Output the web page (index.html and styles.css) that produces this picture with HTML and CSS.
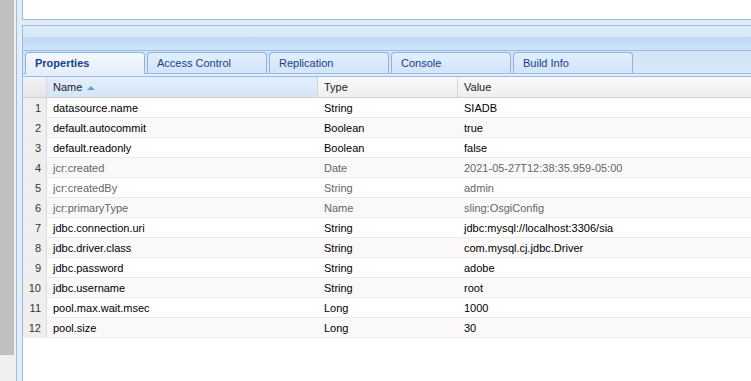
FILE: index.html
```html
<!DOCTYPE html>
<html>
<head>
  <meta charset="utf-8">
  <title>Properties</title>
  <link rel="stylesheet" href="styles.css">
</head>
<body>
  <div class="page">
    <div class="sidebar"><div class="sidebar-bar"></div></div>
    <div class="gutter"></div>
    <div class="split"></div>
    <div class="content">
      <div class="top-panel"></div>
      <div class="props-panel">
        <div class="panel-header"></div>
        <div class="tab-strip">
          <div class="tab active">Properties</div>
          <div class="tab">Access Control</div>
          <div class="tab">Replication</div>
          <div class="tab">Console</div>
          <div class="tab">Build Info</div>
        </div>
        <div class="tab-spacer"></div>
        <div class="grid">
          <div class="grid-head">
            <div class="cell num"></div>
            <div class="cell sorted">Name<span class="sort-arrow"></span></div>
            <div class="cell">Type</div>
            <div class="cell">Value</div>
          </div>
          <div class="grid-row">
            <div class="cell num">1</div>
            <div class="cell">datasource.name</div>
            <div class="cell">String</div>
            <div class="cell">SIADB</div>
          </div>
          <div class="grid-row alt">
            <div class="cell num">2</div>
            <div class="cell">default.autocommit</div>
            <div class="cell">Boolean</div>
            <div class="cell">true</div>
          </div>
          <div class="grid-row">
            <div class="cell num">3</div>
            <div class="cell">default.readonly</div>
            <div class="cell">Boolean</div>
            <div class="cell">false</div>
          </div>
          <div class="grid-row alt protected">
            <div class="cell num">4</div>
            <div class="cell">jcr:created</div>
            <div class="cell">Date</div>
            <div class="cell">2021-05-27T12:38:35.959-05:00</div>
          </div>
          <div class="grid-row protected">
            <div class="cell num">5</div>
            <div class="cell">jcr:createdBy</div>
            <div class="cell">String</div>
            <div class="cell">admin</div>
          </div>
          <div class="grid-row alt protected">
            <div class="cell num">6</div>
            <div class="cell">jcr:primaryType</div>
            <div class="cell">Name</div>
            <div class="cell">sling:OsgiConfig</div>
          </div>
          <div class="grid-row">
            <div class="cell num">7</div>
            <div class="cell">jdbc.connection.uri</div>
            <div class="cell">String</div>
            <div class="cell">jdbc:mysql://localhost:3306/sia</div>
          </div>
          <div class="grid-row alt">
            <div class="cell num">8</div>
            <div class="cell">jdbc.driver.class</div>
            <div class="cell">String</div>
            <div class="cell">com.mysql.cj.jdbc.Driver</div>
          </div>
          <div class="grid-row">
            <div class="cell num">9</div>
            <div class="cell">jdbc.password</div>
            <div class="cell">String</div>
            <div class="cell">adobe</div>
          </div>
          <div class="grid-row alt">
            <div class="cell num">10</div>
            <div class="cell">jdbc.username</div>
            <div class="cell">String</div>
            <div class="cell">root</div>
          </div>
          <div class="grid-row">
            <div class="cell num">11</div>
            <div class="cell">pool.max.wait.msec</div>
            <div class="cell">Long</div>
            <div class="cell">1000</div>
          </div>
          <div class="grid-row alt">
            <div class="cell num">12</div>
            <div class="cell">pool.size</div>
            <div class="cell">Long</div>
            <div class="cell">30</div>
          </div>
        </div>
      </div>
    </div>
  </div>
</body>
</html>
```
FILE: styles.css
```css
body {
  margin: 0;
  font-family: Arial, "Liberation Sans", sans-serif;
  font-size: 11px;
  overflow: hidden;
}

.page {
  display: flex;
  width: 751px;
  height: 381px;
  overflow: hidden;
  background-color: #e4ecf7;
}

/* barra lateral gris */
.sidebar {
  width: 14px;
  flex: none;
  background-color: #f0f0f0;
}

.sidebar-bar {
  height: 355px;
  background-color: #c0c0c0;
}

.gutter {
  width: 2px;
  flex: none;
  background-color: #f0f0f0;
}

.split {
  width: 1px;
  flex: none;
  background-color: #99bbe8;
  margin-right: 5px;
}

.content {
  flex: none;
  width: 760px;
  height: 400px;
  display: flex;
  flex-direction: column;
  gap: 5px;
}

.top-panel {
  height: 19px;
  background-color: #fff;
  border-left: 1px solid #99bbe8;
  border-bottom: 1px solid #99bbe8;
}

.props-panel {
  flex: 1;
  border: 1px solid #99bbe8;
  background-color: #fff;
  display: flex;
  flex-direction: column;
}

.panel-header {
  height: 24px;
  border-bottom: 1px solid #99bbe8;
  background: linear-gradient(#dcebf9, #d6e8f8 45%, #bfdaf4 47%, #c6def6 75%, #d0e4f8);
}

/* pestañas */
.tab-strip {
  height: 22px;
  display: flex;
  align-items: flex-end;
  gap: 2px;
  padding-left: 2px;
  border-bottom: 1px solid #99bbe8;
  background: linear-gradient(#d2e4f8, #d8e8fa);
}

.tab {
  box-sizing: border-box;
  width: 120px;
  height: 21px;
  padding: 1px 9px 0;
  border: 1px solid #8db2e3;
  border-bottom: none;
  border-radius: 4px 4px 0 0;
  background: linear-gradient(#e2eefb, #d3e4f8);
  color: #15428b;
  font-family: Tahoma, "Liberation Sans", sans-serif;
  font-size: 11px;
  line-height: 19px;
}

.tab.active {
  height: 22px;
  margin-bottom: -1px;
  font-weight: bold;
  background: linear-gradient(#f5f9fe, #e4eefb);
}

.tab-spacer {
  height: 2px;
  background-color: #e4eefb;
  border-bottom: 1px solid #99bbe8;
}

/* tabla de propiedades */
.grid-head,
.grid-row {
  display: grid;
  grid-template-columns: 24px 271px 140px 1fr;
}

.grid-head {
  height: 20px;
  border-bottom: 1px solid #d3cfcf;
  background: linear-gradient(#f9f9f9, #eeeeee);
  color: #222;
}

.grid-head .cell {
  padding-top: 1px;
  line-height: 19px;
  border-right: 1px solid #d5d5d5;
}

.grid-head .cell.sorted {
  background: linear-gradient(#e3eefb, #d5e6f8);
}

.sort-arrow {
  display: inline-block;
  margin-left: 5px;
  vertical-align: 1px;
  border-left: 4px solid transparent;
  border-right: 4px solid transparent;
  border-bottom: 4px solid #6b9bd8;
}

.cell {
  box-sizing: border-box;
  padding: 0 6px;
  white-space: nowrap;
  overflow: hidden;
}

.cell.num {
  padding-left: 0;
  padding-right: 5px;
  text-align: right;
  background-color: #efefef;
  border-right: 1px solid #d9d9d9;
  color: #333;
}

.grid-head .cell.num {
  background: linear-gradient(#f3f3f3, #e6e6e6);
}

.grid-row {
  height: 20px;
  box-sizing: border-box;
  border-bottom: 1px solid #ececec;
  color: #000;
}

.grid-row .cell {
  padding-top: 1px;
  line-height: 18px;
}

.grid-row.alt {
  background-color: #faf8f8;
}

.grid-row.protected {
  color: #666;
}

.grid-row.protected .cell.num {
  color: #333;
}
```
